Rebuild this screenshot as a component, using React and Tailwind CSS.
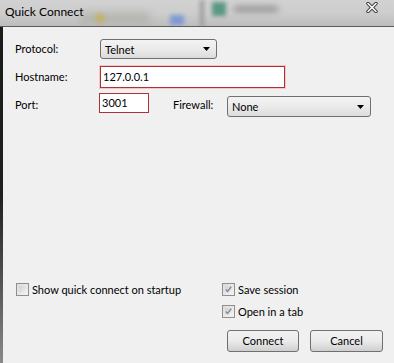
import React from 'react';

const font = { fontFamily: 'Lato, "Noto Sans", sans-serif' };

const Arrow = () => (
  <svg width="7" height="4" viewBox="0 0 7 4" className="shrink-0">
    <path d="M0 0h7L3.5 4z" fill="#000" />
  </svg>
);

const Select = ({ value, className }) => (
  <div
    className={`flex items-center justify-between pl-[4px] pr-[6px] border border-[#707070] rounded-[3px] bg-gradient-to-b from-[#f3f3f3] via-[#ebebeb] to-[#dcdcdc] ${className}`}
  >
    <span className="text-[11px] text-black leading-none">{value}</span>
    <Arrow />
  </div>
);

const CheckBox = ({ checked, label }) => (
  <div className="flex items-center h-[13px]">
    <div className="w-[13px] h-[13px] border border-[#8f8f8f] bg-gradient-to-br from-[#dcdcdc] to-[#f4f4f4] p-[2px] shrink-0">
      <div className="w-full h-full bg-gradient-to-br from-[#cfcfcf] to-[#f2f2f2] flex items-center justify-center">
        {checked && (
          <svg width="9" height="9" viewBox="0 0 9 9">
            <path d="M1 4.5l2.3 2.6L8 1" fill="none" stroke="#8a8a8a" strokeWidth="1.8" />
          </svg>
        )}
      </div>
    </div>
    <span className="ml-[3px] text-[11px] text-black whitespace-nowrap leading-none">{label}</span>
  </div>
);

const Button = ({ children, className }) => (
  <div
    className={`h-[22px] flex items-center justify-center border border-[#707070] rounded-[3px] bg-gradient-to-b from-[#f2f2f2] via-[#ebebeb] to-[#cfcfcf] text-[11px] text-black ${className}`}
  >
    {children}
  </div>
);

export default function App() {
  return (
    <div className="w-[394px] h-[363px] flex flex-col overflow-hidden bg-[#f0f0f0]" style={font}>
      {/* title bar */}
      <div className="relative h-[27px] shrink-0 bg-gradient-to-b from-[#d2d2d2] via-[#cdcdcd] to-[#bdbdbd] border-b border-[#5c5c5c] overflow-hidden">
        <div className="absolute left-[80px] top-[12px] w-[70px] h-[12px] bg-[#a9a9a0] blur-[4px] opacity-60" />
        <div className="absolute left-[96px] top-[14px] w-[8px] h-[8px] bg-[#c8b040] blur-[2px] opacity-70" />
        <div className="absolute left-[170px] top-[15px] w-[14px] h-[10px] bg-[#6d8fd8] blur-[2px] opacity-80" />
        <div className="absolute left-[200px] top-0 w-[4px] h-[27px] bg-[#9a9a9a] blur-[2px]" />
        <div className="absolute left-[212px] top-[2px] w-[14px] h-[14px] bg-[#3e8a72] blur-[2px] opacity-80" />
        <div className="absolute left-[234px] top-[6px] w-[44px] h-[6px] bg-[#707070] blur-[3px] opacity-60" />
        <span className="absolute left-[5px] top-[6px] text-[12px] text-black leading-none">Quick Connect</span>
        <svg className="absolute left-[366px] top-[2px]" width="12" height="11" viewBox="0 0 12 11">
          <path d="M2 1.5l8 8M10 1.5l-8 8" stroke="#3a3a3a" strokeWidth="3.4" strokeLinecap="round" />
          <path d="M2 1.5l8 8M10 1.5l-8 8" stroke="#fff" strokeWidth="1.6" strokeLinecap="round" />
        </svg>
      </div>

      <div className="flex flex-1 min-h-0">
        <div className="w-[3px] bg-gradient-to-b from-[#1a1a1a] via-[#202020] to-[#8a8a8a] shrink-0" />
        <div className="flex-1 flex flex-col pl-[12px] pb-[11px]">
          {/* protocol */}
          <div className="flex items-center h-[20px] mt-[12px]">
            <span className="w-[85px] text-[11px] text-black">Protocol:</span>
            <Select value="Telnet" className="w-[117px] h-[20px]" />
          </div>
          {/* hostname */}
          <div className="flex items-center h-[22px] mt-[7px]">
            <span className="w-[85px] text-[11px] text-black">Hostname:</span>
            <div className="w-[185px] h-[22px] bg-white border border-[#b03038] shadow-[0_0_0_1px_#f3c6c6] flex items-center pl-[2px] text-[11px] text-black">
              127.0.0.1
            </div>
          </div>
          {/* port / firewall */}
          <div className="flex items-center h-[24px] mt-[5px]">
            <span className="w-[84px] text-[11px] text-black">Port:</span>
            <div className="self-start w-[50px] h-[20px] bg-white border border-[#b03038] flex items-center pl-[2px] text-[11px] text-black">
              3001
            </div>
            <span className="ml-[24px] w-[54px] text-[11px] text-black">Firewall:</span>
            <Select value="None" className="self-end w-[144px] h-[21px]" />
          </div>

          <div className="flex-1" />

          {/* bottom */}
          <div className="flex">
            <div className="w-[207px] pl-[1px]">
              <CheckBox label="Show quick connect on startup" />
            </div>
            <div className="flex flex-col">
              <CheckBox checked label="Save session" />
              <div className="mt-[9px]">
                <CheckBox checked label="Open in a tab" />
              </div>
              <div className="flex mt-[12px] ml-[5px] gap-[11px]">
                <Button className="w-[72px] border-[#3d3d3d]">Connect</Button>
                <Button className="w-[73px]">Cancel</Button>
              </div>
            </div>
          </div>
        </div>
      </div>
    </div>
  );
}
